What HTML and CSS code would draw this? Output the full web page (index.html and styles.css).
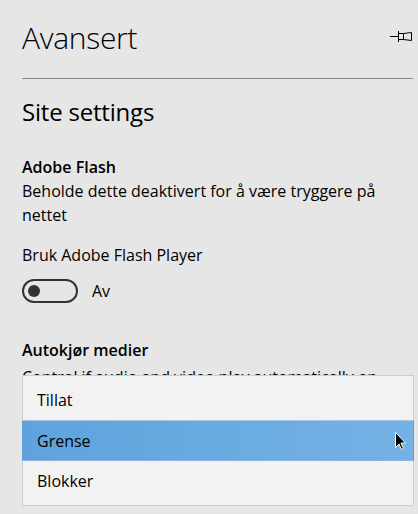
FILE: index.html
```html
<!DOCTYPE html>
<html lang="no">
<head>
<meta charset="utf-8">
<link rel="stylesheet" href="styles.css">
</head>
<body>
<div class="pane">
  <header class="head">
    <h1 class="title">Avansert</h1>
    <svg class="pin" width="24" height="14" viewBox="0 0 24 14" aria-hidden="true">
      <g stroke="#000" stroke-width="1" fill="none">
        <path d="M1 6.5H9"/>
        <path d="M9.5 1V12"/>
        <path d="M9.5 3.5H14.5L22.5 2.5V10.5L14.5 9.5H9.5"/>
        <path d="M14.5 3.5V9.5"/>
      </g>
    </svg>
  </header>
  <div class="rule"></div>
  <h2 class="section">Site settings</h2>
  <section class="group">
    <h3 class="label">Adobe Flash</h3>
    <p class="desc">Beholde dette deaktivert for å være tryggere på nettet</p>
    <p class="setting">Bruk Adobe Flash Player</p>
    <div class="toggle-row">
      <span class="toggle"><span class="knob"></span></span>
      <span class="state">Av</span>
    </div>
  </section>
  <section class="group media">
    <h3 class="label">Autokjør medier</h3>
    <p class="desc hidden-under">Control if audio and video play automatically on websites</p>
    <ul class="dropdown">
      <li class="opt">Tillat</li>
      <li class="opt selected">Grense
        <svg class="cursor" width="12" height="19" viewBox="0 0 12 19" aria-hidden="true">
          <path d="M0.5 0.5V15.5L4 12L6.5 17.5L8.5 16.5L6 11H10.5Z" fill="#000" stroke="#fff" stroke-width="1"/>
        </svg>
      </li>
      <li class="opt">Blokker</li>
    </ul>
  </section>
</div>
</body>
</html>
```

FILE: styles.css
```css
* { box-sizing: border-box; }
html, body { margin: 0; padding: 0; }
body {
  background: #e6e6e6;
  font-family: "Open Sans", "Noto Sans", sans-serif;
  color: #000;
  width: 418px;
  height: 514px;
  overflow: hidden;
}
.pane {
  padding: 0 5px 0 22px;
  position: relative;
  height: 514px;
}
.head {
  display: flex;
  align-items: center;
  justify-content: space-between;
  height: 78px;
}
.title {
  margin: 0;
  font-weight: 300;
  font-size: 30px;
  line-height: 40px;
  margin-top: -2px;
  letter-spacing: -0.3px;
}
.pin {
  align-self: flex-start;
  margin-top: 30px;
}
.rule {
  height: 1px;
  background: #8c8c8c;
}
.section {
  margin: 17px 0 0;
  font-weight: 400;
  font-size: 24px;
  line-height: 32px;
  letter-spacing: -0.2px;
}
.group { margin-top: 27px; }
.label {
  margin: 0;
  font-weight: 600;
  font-size: 16px;
  line-height: 24px;
}
.desc, .setting {
  margin: 0;
  font-size: 16px;
  line-height: 24px;
  max-width: 370px;
}
.setting { margin-top: 16px; }
.hidden-under { margin-top: 3px; }
.toggle-row {
  display: flex;
  align-items: center;
  gap: 14px;
  margin-top: 12px;
}
.toggle {
  width: 56px;
  height: 24px;
  border: 2px solid #333;
  border-radius: 12px;
  display: flex;
  align-items: center;
  padding-left: 4px;
}
.knob {
  width: 12px;
  height: 12px;
  border-radius: 50%;
  background: #333;
}
.state { font-size: 16px; line-height: 24px; }
.media { margin-top: 35px; }
.dropdown {
  position: absolute;
  left: 22px;
  top: 375px;
  width: 392px;
  height: 131px;
  margin: 0;
  padding: 4px 0 7px;
  list-style: none;
  background: #f2f2f2;
  border: 1px solid #cdcdcd;
}
.opt {
  height: 40px;
  display: flex;
  align-items: center;
  padding-left: 14px;
  font-size: 16px;
  position: relative;
}
.selected {
  margin: 0 -1px;
  padding-left: 15px;
  background: linear-gradient(90deg, #5ea3dd, #74b2e5);
  border-top: 1px solid #a9c5e4;
  border-bottom: 1px solid #8fb3dc;
  border-right: 1px solid #7f94b8;
  height: 41px;
}
.cursor {
  position: absolute;
  left: 373px;
  top: 11px;
}
```
